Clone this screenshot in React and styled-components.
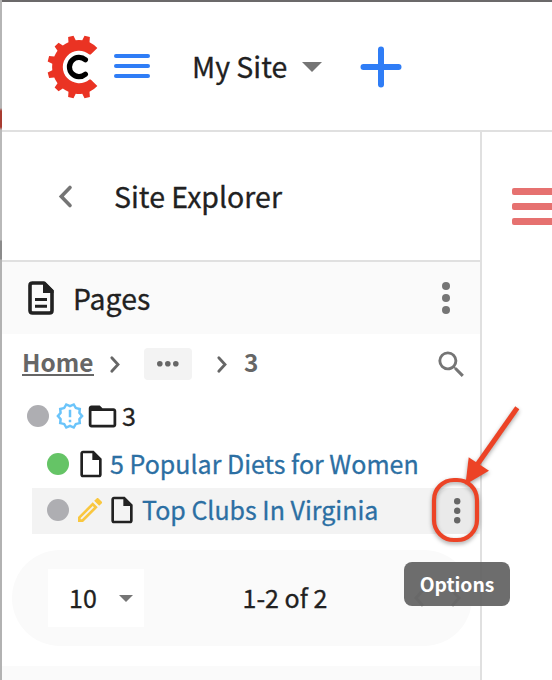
import React from "react";
import styled, { createGlobalStyle } from "styled-components";
import {
  MdSearch,
  MdOutlineNewReleases,
  MdFolderOpen,
  MdOutlineInsertDriveFile,
  MdOutlineEdit,
} from "react-icons/md";

const GlobalStyle = createGlobalStyle`
  * { box-sizing: border-box; }
  body {
    margin: 0;
    overflow: hidden;
    background: #fff;
    color: #212121;
    font-family: "Noto Sans CJK SC", "Noto Sans", sans-serif;
  }
`;

const Window = styled.div`
  position: relative;
  display: grid;
  grid-template: 130px 1fr / 480px 1fr;
  width: 552px;
  height: 680px;
  padding-left: 2px;
  padding-top: 2px;
  background: #fff;
  overflow: hidden;
`;

const TopEdge = styled.div`
  position: absolute;
  inset: 0 0 auto 0;
  height: 2px;
  background: #6b696a;
`;

const LeftEdge = styled.div`
  position: absolute;
  inset: 0 auto 0 0;
  width: 2px;
  background: linear-gradient(
    #b5b5b5 0 108px, #a83c31 111px 127px, #b9b9b9 130px 240px,
    #8b8b8b 241px 259px, #b2b2b2 260px);
`;

const Header = styled.header`
  grid-column: 1 / -1;
  display: flex;
  align-items: center;
  border-bottom: 2px solid #e0e0e0;
`;

const Sidebar = styled.aside`
  display: flex;
  flex-direction: column;
  border-right: 2px solid #e0e0e0;
`;

const Preview = styled.main`
  padding: 55.5px 0 0 30px;
`;

const Icon = styled.svg`
  display: block;
  flex: none;
  margin-left: ${(p) => p.$gap || 0}px;
  margin-top: ${(p) => p.$drop || 0}px;
  overflow: visible;
`;

const Text = styled.span`
  flex: none;
  width: ${(p) => p.$width}px;
  margin-left: ${(p) => p.$gap || 0}px;
  padding-bottom: ${(p) => p.$lift || 0}px;
  font-size: ${(p) => p.$size}px;
  font-weight: ${(p) => (p.$bold ? 700 : 400)};
  line-height: 36px;
  white-space: nowrap;
  color: ${(p) => p.$color || "#212121"};
  -webkit-text-stroke: ${(p) => (p.$bold ? 0 : 0.3)}px currentColor;
`;

const HomeLink = styled(Text)`
  height: 28px;
  margin-bottom: 4px;
  line-height: 27px;
  border-bottom: 2px solid #666;
`;

const PanelTitle = styled.div`
  display: flex;
  align-items: center;
  height: 130px;
  padding-left: 56px;
  border-bottom: 2px solid #e0e0e0;
`;

const SectionHeader = styled.div`
  display: flex;
  align-items: center;
  height: 72px;
  padding-left: 26px;
  background: #fafafa;
`;

const Breadcrumbs = styled.nav`
  display: flex;
  align-items: center;
  height: 60px;
  padding-left: 20px;
`;

const Ellipsis = styled.span`
  display: grid;
  place-items: center;
  width: 48px;
  height: 32px;
  margin-left: 24px;
  border-radius: 4px;
  background: #f3f3f3;
`;

const TreeRow = styled.div`
  display: flex;
  align-items: center;
  height: ${(p) => p.$height}px;
  margin-left: ${(p) => p.$indent}px;
  margin-bottom: ${(p) => p.$after || 0}px;
  padding-left: ${(p) => p.$inset || 0}px;
  padding-bottom: ${(p) => (p.$selected ? 2 : 0)}px;
  background: ${(p) => (p.$selected ? "#f3f3f3" : "transparent")};
`;

const Status = styled.span`
  flex: none;
  width: 22px;
  height: 22px;
  border-radius: 50%;
  background: ${(p) => (p.$live ? "#65c466" : "#aeaeb2")};
`;

const Glyph = styled.span`
  display: flex;
  flex: none;
  margin-left: ${(p) => p.$gap}px;
  color: ${(p) => p.$color || "#212121"};
`;

const OptionsButton = styled.span`
  display: grid;
  place-items: center;
  width: 46px;
  height: 46px;
  margin: 0 0 -2px auto;
  border-radius: 18px;
  background: #eaeaea;
`;

const Pagination = styled.div`
  display: flex;
  align-items: center;
  flex: none;
  width: 460px;
  height: 96px;
  margin: 16px 0 20px 10px;
  padding-left: 36px;
  border-radius: 48px;
  background: #fafafa;
`;

const Select = styled.div`
  display: flex;
  align-items: center;
  width: 96px;
  height: 58px;
  padding-left: 21px;
  background: #fff;
`;

const NextSection = styled.div`
  flex: 1;
  background: #fafafa;
`;

const Bars = styled.div`
  display: flex;
  flex-direction: column;
  gap: ${(p) => p.$gap}px;
  width: ${(p) => p.$width}px;
  margin-left: ${(p) => p.$left || 0}px;
`;

const Bar = styled.span`
  height: ${(p) => p.$thick}px;
  border-radius: 2px;
  background: ${(p) => p.$color};
`;

const Tooltip = styled.div`
  position: absolute;
  left: 404px;
  top: 562px;
  display: flex;
  align-items: center;
  justify-content: center;
  width: 106px;
  height: 44px;
  border-radius: 8px;
  background: rgba(97, 97, 97, 0.92);
`;

const Callout = styled.svg`
  position: absolute;
  left: 422px;
  top: 396px;
  filter: drop-shadow(0 2px 2px rgba(0, 0, 0, 0.35));
`;

const polar = (r, deg) => {
  const a = (deg * Math.PI) / 180;
  return `${(r * Math.cos(a)).toFixed(2)},${(-r * Math.sin(a)).toFixed(2)}`;
};

const gearPath = () => {
  const body = 26.9;
  let d = `M${polar(17.2, 47)} L${polar(26.4, 46)}`;
  for (let a = 75; a <= 285; a += 30) {
    d += ` A${body} ${body} 0 0 0 ${polar(body, a - 8)}`;
    d += ` L${polar(31.8, a - 5)} L${polar(31.8, a + 5)} L${polar(body, a + 8)}`;
  }
  d += ` A${body} ${body} 0 0 0 ${polar(26.4, 314)} L${polar(17.2, 313)}`;
  d += ` L${polar(16.2, 310)} A16.2 16.2 0 1 1 ${polar(16.2, 50)} Z`;
  return d;
};

const Logo = () => (
  <Icon width="52" height="64" viewBox="-32 -32 52 64" $gap={45} $drop={2}>
    <path d={gearPath()} fill="#ea3323" />
    <path
      d="M6.4 -7.2 A9.6 9.6 0 1 0 6.4 7.2"
      fill="none"
      stroke="#000"
      strokeWidth="5.2"
      strokeLinecap="round"
    />
  </Icon>
);

const Caret = ({ width, height, gap, drop }) => (
  <Icon width={width} height={height} viewBox="0 0 20 10" preserveAspectRatio="none" $gap={gap} $drop={drop}>
    <path d="M0 0H20L10 10Z" fill="#757575" />
  </Icon>
);

const Crumb = ({ gap }) => (
  <Icon width="10" height="17" viewBox="0 0 10 17" $gap={gap}>
    <path d="M1.8 1.8 8 8.5 1.8 15.2" fill="none" stroke="#666" strokeWidth="2.8" strokeLinecap="round" />
  </Icon>
);

const Dots = ({ radius, step, gap, horizontal, color = "#757575" }) => {
  const long = step * 2 + radius * 2;
  const short = radius * 2;
  return (
    <Icon width={horizontal ? long : short} height={horizontal ? short : long} $gap={gap}>
      {[0, 1, 2].map((i) => (
        <circle
          key={i}
          cx={horizontal ? radius + i * step : radius}
          cy={horizontal ? radius : radius + i * step}
          r={radius}
          fill={color}
        />
      ))}
    </Icon>
  );
};

const PagesIcon = () => (
  <Icon width="26" height="34" viewBox="0 0 26 34">
    <path d="M4 2H16L24 10V29.5Q24 32 21.5 32H4.5Q2 32 2 29.5V4.5Q2 2 4.5 2Z" fill="none" stroke="#212121" strokeWidth="3.6" strokeLinejoin="round" />
    <path d="M15 1H17L25.5 9.5V12H15Z" fill="#212121" />
    <path d="M7 18.5H19M7 25.3H19" stroke="#212121" strokeWidth="3" />
  </Icon>
);

export default function App() {
  return (
    <Window>
      <GlobalStyle />
      <Header>
        <Logo />
        <Bars $gap={6} $width={36} $left={15}>
          {[0, 1, 2].map((i) => <Bar key={i} $thick={4} $color="#2f7df6" />)}
        </Bars>
        <Text $gap={42} $width={97} $size={28.5}>My Site</Text>
        <Caret width={20} height={10} gap={13} drop={2} />
        <Icon width="42" height="42" $gap={38} $drop={2}>
          <path d="M21 3.5V38.5M3.5 21H38.5" stroke="#2f7df6" strokeWidth="6" strokeLinecap="round" />
        </Icon>
      </Header>

      <Sidebar>
        <PanelTitle>
          <Icon width="14" height="23" viewBox="0 0 14 23">
            <path d="M12 2.5 3.3 11.5 12 20.5" fill="none" stroke="#757575" strokeWidth="3.6" strokeLinecap="round" />
          </Icon>
          <Text $gap={42} $width={180} $size={28.5} $lift={1}>Site Explorer</Text>
        </PanelTitle>

        <SectionHeader>
          <PagesIcon />
          <Text $gap={19} $width={90} $size={28.4} $lift={1}>Pages</Text>
          <Dots radius={4} step={12} gap={279} />
        </SectionHeader>

        <Breadcrumbs>
          <HomeLink $width={72} $size={24.4} $bold $color="#666">Home</HomeLink>
          <Crumb gap={16} />
          <Ellipsis><Dots horizontal radius={2.8} step={8} color="#666" /></Ellipsis>
          <Crumb gap={25} />
          <Text $gap={17} $width={16} $size={24.4} $lift={4} $bold $color="#666">3</Text>
          <Glyph $gap={174} $color="#757575"><MdSearch size={35} /></Glyph>
        </Breadcrumbs>

        <TreeRow $height={44} $indent={25} $after={2}>
          <Status />
          <Glyph $gap={6} $color="#6bc4fa"><MdOutlineNewReleases size={30} /></Glyph>
          <Glyph $gap={0.5}><MdFolderOpen size={33} /></Glyph>
          <Text $gap={3.5} $width={20} $size={25} $lift={2}>3</Text>
        </TreeRow>
        <TreeRow $height={48} $indent={30} $inset={15}>
          <Status $live />
          <Glyph $gap={5.5}><MdOutlineInsertDriveFile size={32} /></Glyph>
          <Text $gap={3.5} $width={320} $size={25} $lift={2} $color="#2c6fa3">5 Popular Diets for Women</Text>
        </TreeRow>
        <TreeRow $height={46} $indent={30} $inset={15} $selected>
          <Status />
          <Glyph $gap={5} $color="#f9c73f"><MdOutlineEdit size={32} /></Glyph>
          <Glyph $gap={0}><MdOutlineInsertDriveFile size={32} /></Glyph>
          <Text $gap={4} $width={240} $size={25} $lift={2} $color="#2c6fa3">Top Clubs In Virginia</Text>
          <OptionsButton><Dots radius={3.2} step={9.5} color="#666" /></OptionsButton>
        </TreeRow>

        <Pagination>
          <Select>
            <Text $width={32} $size={25} $lift={2}>10</Text>
            <Caret width={14} height={7} gap={18} />
          </Select>
          <Text $gap={98.5} $width={90} $size={25} $lift={2}>1-2 of 2</Text>
          <Icon width="48" height="16" viewBox="0 0 48 16" $gap={81.5}>
            <path d="M9 0 2 8 9 16M38 0 45 8 38 16" fill="none" stroke="#bdbdbd" strokeWidth="3" />
          </Icon>
        </Pagination>
        <NextSection />
      </Sidebar>

      <Preview>
        <Bars $gap={8} $width={44}>
          {[0, 1, 2].map((i) => <Bar key={i} $thick={7} $color="#e67170" />)}
        </Bars>
      </Preview>

      <TopEdge />
      <LeftEdge />
      <Tooltip><Text $size={19.3} $bold $color="#fff">Options</Text></Tooltip>
      <Callout width="110" height="160" viewBox="422 396 110 160">
        <rect x="434" y="480" width="43" height="60" rx="20" fill="none" stroke="#ec4326" strokeWidth="4.2" />
        <path d="M517.3 407.8 477 465" stroke="#ec4326" strokeWidth="5" />
        <path d="M468.7 457.2 489 470.8 465.5 484.4Z" fill="#ec4326" />
      </Callout>
    </Window>
  );
}
